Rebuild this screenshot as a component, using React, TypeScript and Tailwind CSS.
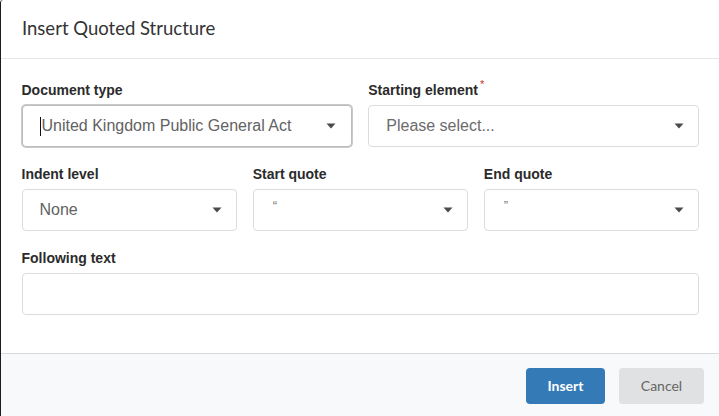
import React from 'react'

/* ─────────────────────────────────────────────
 * Insert Quoted Structure dialog
 * ───────────────────────────────────────────── */

interface SelectProps {
  value: string
  placeholder?: boolean
  focused?: boolean
  small?: boolean
}

/** Down-pointing caret used by every select */
function Caret(): React.ReactElement {
  return (
    <svg width="10" height="6" viewBox="0 0 10 6" className="shrink-0">
      <path d="M0.5 0.5 L9.5 0.5 L5 5.5 Z" fill="#4a4a4a" />
    </svg>
  )
}

function SelectBox({ value, placeholder, focused, small }: SelectProps): React.ReactElement {
  return (
    <div
      className={
        focused
          ? 'flex h-[42px] items-center justify-between rounded-[4px] border border-[#bdbdbd] bg-white pl-[17px] pr-[15px] shadow-[0_0_0_1px_#c9c9c9]'
          : 'flex h-[42px] items-center justify-between rounded-[4px] border border-[#dcdcdc] bg-white pl-[17px] pr-[14px]'
      }
    >
      <span className="flex items-center">
        {/* text cursor in the focused field */}
        {focused && <span className="mr-px h-[19px] w-px bg-[#111]" />}
        <span
          className={
            small
              ? 'pb-[9px] pl-[2px] text-[13px] text-[#7a7a7a]'
              : placeholder
                ? 'text-base text-[#6b6b6b]'
                : 'text-base text-[#626262]'
          }
        >
          {value}
        </span>
      </span>
      <Caret />
    </div>
  )
}

function Label({ text, required }: { text: string, required?: boolean }): React.ReactElement {
  return (
    <div className="mb-1 flex h-[22px] items-center text-sm font-bold text-[#2b2b2b]">
      {text}
      {required && <span className="relative -top-[5px] ml-[2px] text-[11px] font-normal text-[#c9302c]">*</span>}
    </div>
  )
}

export default function App(): React.ReactElement {
  return (
    <div className="h-[416px] w-[719px] overflow-hidden rounded-tl-[3px] border-l-[1.5px] border-[#1c1c1c] bg-white font-['Liberation_Sans',Arial,sans-serif]">
      {/* ── Header ── */}
      <div className="flex h-[59px] items-center border-b border-[#e6e6e6] pl-[21px]">
        <h1 className="font-['Lato',sans-serif] text-[18.5px] text-[#333]">Insert Quoted Structure</h1>
      </div>

      {/* ── Body ── */}
      <div className="flex flex-col gap-4 pb-[38px] pl-[20.5px] pr-5 pt-5">
        <div className="grid grid-cols-2 gap-4">
          <div>
            <Label text="Document type" />
            <SelectBox value="United Kingdom Public General Act" focused />
          </div>
          <div>
            <Label text="Starting element" required />
            <SelectBox value="Please select..." placeholder />
          </div>
        </div>

        <div className="grid grid-cols-3 gap-4">
          <div>
            <Label text="Indent level" />
            <SelectBox value="None" />
          </div>
          <div>
            <Label text="Start quote" />
            <SelectBox value="“" small />
          </div>
          <div>
            <Label text="End quote" />
            <SelectBox value="”" small />
          </div>
        </div>

        <div>
          <Label text="Following text" />
          <div className="h-[42px] rounded-[4px] border border-[#dcdcdc] bg-white" />
        </div>
      </div>

      {/* ── Footer ── */}
      <div className="flex h-[80px] justify-end gap-[14px] border-t border-[#d8dadd] bg-[#f8f9fa] pr-[15px] pt-[14px] font-['Lato',sans-serif] text-sm">
        <button className="h-[36px] w-[79px] rounded-[4px] bg-[#337ab7] font-bold text-white">Insert</button>
        <button className="h-[36px] w-[85px] rounded-[4px] bg-[#e0e1e2] text-[#666]">Cancel</button>
      </div>
    </div>
  )
}
